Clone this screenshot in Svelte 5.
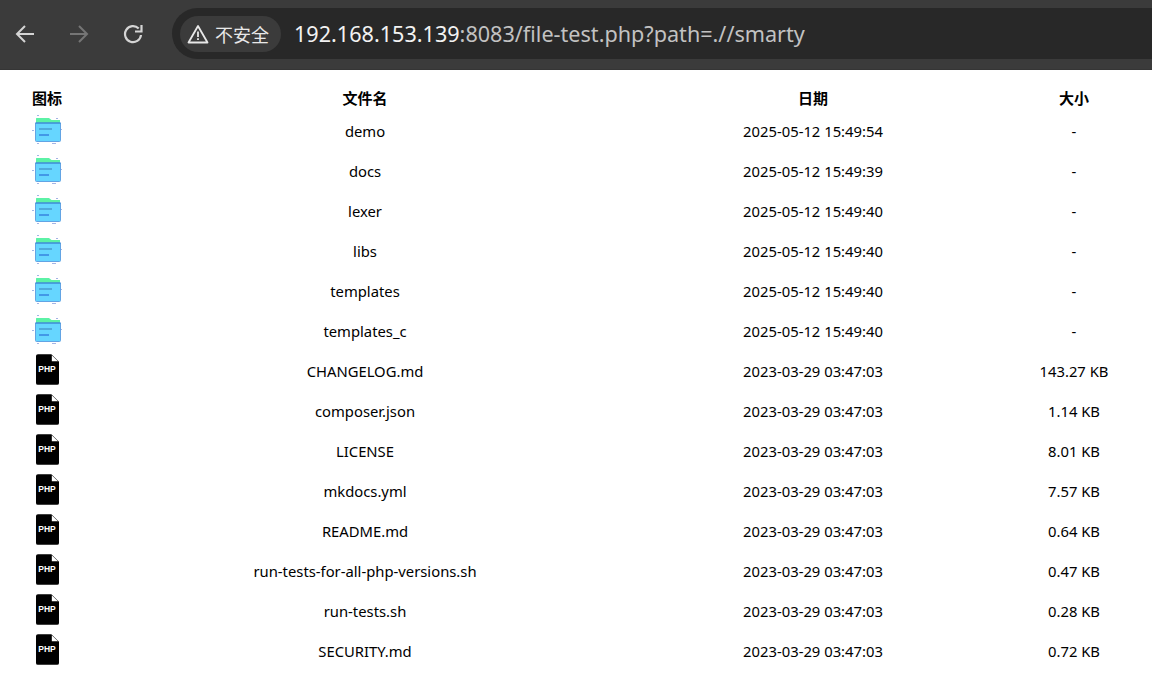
<script lang="ts">
  const rows = [
    { name: 'demo', date: '2025-05-12 15:49:54', size: '-', dir: true },
    { name: 'docs', date: '2025-05-12 15:49:39', size: '-', dir: true },
    { name: 'lexer', date: '2025-05-12 15:49:40', size: '-', dir: true },
    { name: 'libs', date: '2025-05-12 15:49:40', size: '-', dir: true },
    { name: 'templates', date: '2025-05-12 15:49:40', size: '-', dir: true },
    { name: 'templates_c', date: '2025-05-12 15:49:40', size: '-', dir: true },
    { name: 'CHANGELOG.md', date: '2023-03-29 03:47:03', size: '143.27 KB', dir: false },
    { name: 'composer.json', date: '2023-03-29 03:47:03', size: '1.14 KB', dir: false },
    { name: 'LICENSE', date: '2023-03-29 03:47:03', size: '8.01 KB', dir: false },
    { name: 'mkdocs.yml', date: '2023-03-29 03:47:03', size: '7.57 KB', dir: false },
    { name: 'README.md', date: '2023-03-29 03:47:03', size: '0.64 KB', dir: false },
    { name: 'run-tests-for-all-php-versions.sh', date: '2023-03-29 03:47:03', size: '0.47 KB', dir: false },
    { name: 'run-tests.sh', date: '2023-03-29 03:47:03', size: '0.28 KB', dir: false },
    { name: 'SECURITY.md', date: '2023-03-29 03:47:03', size: '0.72 KB', dir: false }
  ];
</script>

<header class="toolbar">
  <svg class="nav" viewBox="0 0 20 20" width="20" height="20" fill="none" stroke="#d4d4d4" stroke-width="2">
    <path d="M19 10H2.500M10 2 2 10l8 8" />
  </svg>
  <svg class="nav" viewBox="0 0 20 20" width="20" height="20" fill="none" stroke="#757575" stroke-width="2">
    <path d="M1 10h16.500M10 2l8 8-8 8" />
  </svg>
  <svg class="nav" viewBox="0 0 20 20" width="20" height="20" fill="none" stroke="#d4d4d4" stroke-width="2.200">
    <path d="M18 11A8 8 0 1 1 15.700 4.500" />
    <path d="M18.500 1v6.500h-6.500" />
  </svg>
  <div class="omnibox">
    <div class="chip">
      <svg viewBox="0 0 22 20" width="22" height="20" fill="none" stroke="#e8e8e8" stroke-width="1.800">
        <path d="M11 2 1.500 18.500h19z" stroke-linejoin="round" />
        <path d="M11 7.500v5.500M11 14.200v1.800" />
      </svg>
      <span>不安全</span>
    </div>
    <div class="url"><b>192.168.153.139</b>:8083/file-test.php?path=.//smarty</div>
  </div>
</header>

<table>
  <colgroup>
    <col style="width:94px" />
    <col style="width:542px" />
    <col style="width:354px" />
    <col style="width:162px" />
  </colgroup>
  <thead>
    <tr>
      <th>图标</th>
      <th>文件名</th>
      <th>日期</th>
      <th class="size">大小</th>
    </tr>
  </thead>
  <tbody>
    {#each rows as row}
      <tr>
        <td class="icon">
          {#if row.dir}
            <svg viewBox="0 0 30 32" width="30" height="32">
              <path d="M4 8V3.500q0-.5.500-.5H17l2.500 2H28v3z" fill="#5cf2a6" />
              <path d="M3.500 8h25v17.500a1 1 0 0 1-1 1h-23a1 1 0 0 1-1-1z" fill="#66d6ff" stroke="#62a4e4" stroke-width="1" />
              <path d="M3.500 8h25" stroke="#2f7fd0" stroke-width="1" />
              <path d="M7 14h13" stroke="#3a80b8" stroke-width="1" />
              <path d="M7 20h10" stroke="#1f5bd0" stroke-width="1" />
              <path d="M5 .5h2M24 3.500h2M0 15.500h2M29 14.500h1M5 28.500h2M20 28.500h4" stroke="#a4b4e4" stroke-width="1" />
            </svg>
          {:else}
            <div class="php">
              <svg viewBox="0 0 24 32" width="23" height="31">
                <path d="M2 0h14l8 8v22a2 2 0 0 1-2 2H2a2 2 0 0 1-2-2V2a2 2 0 0 1 2-2z" fill="#000" />
                <path d="M16.500 1 23 7.500h-6.500z" fill="#fff" />
              </svg>
              <span>PHP</span>
            </div>
          {/if}
        </td>
        <td>{row.name}</td>
        <td>{row.date}</td>
        <td class="size">{row.size}</td>
      </tr>
    {/each}
  </tbody>
</table>

<style>
  :global(body) {
    background: #fff;
    font-family: "Noto Sans", "Noto Sans CJK SC", sans-serif;
    overflow: hidden;
  }

  .toolbar {
    height: 70px;
    box-sizing: border-box;
    background: #3b3b3b;
    border-bottom: 1px solid #353535;
    display: flex;
    align-items: center;
    padding: 0 0 2px 15px;
  }

  .nav {
    margin: 1px 34px 0 0;
    flex: none;
  }

  .omnibox {
    flex: 1;
    height: 51px;
    margin-left: -5px;
    background: #282828;
    border-radius: 26px 0 0 26px;
    display: flex;
    align-items: center;
    padding-left: 8px;
  }

  .chip {
    height: 36px;
    width: 101px;
    box-sizing: border-box;
    background: #3b3b3b;
    border-radius: 18px;
    display: flex;
    align-items: center;
    gap: 6px;
    padding-left: 7px;
    color: #e8e8e8;
    font-size: 18px;
  }

  .url {
    margin-left: 13px;
    color: #c2c2c2;
    font-size: 21.600px;
    white-space: nowrap;
  }

  .url b {
    color: #f2f2f2;
    font-weight: 400;
  }

  table {
    width: 1152px;
    table-layout: fixed;
    border-collapse: collapse;
    margin-top: 15px;
    font-size: 14.800px;
    color: #000;
  }

  th {
    height: 26px;
    padding: 0;
    font-size: 15px;
    font-weight: 700;
    text-align: center;
    line-height: 24px;
  }

  td {
    height: 40px;
    padding: 0;
    text-align: center;
  }

  .size {
    padding-left: 6px;
    padding-right: 0;
  }

  .icon svg {
    display: block;
    margin: 0 auto;
  }

  .php {
    position: relative;
    width: 23px;
    height: 31px;
    margin: -4px auto 0;
  }

  .php span {
    position: absolute;
    left: 0;
    right: 0;
    top: 9px;
    color: #fff;
    font: 700 8.500px/12px "Liberation Sans", sans-serif;
    text-align: center;
  }
</style>
